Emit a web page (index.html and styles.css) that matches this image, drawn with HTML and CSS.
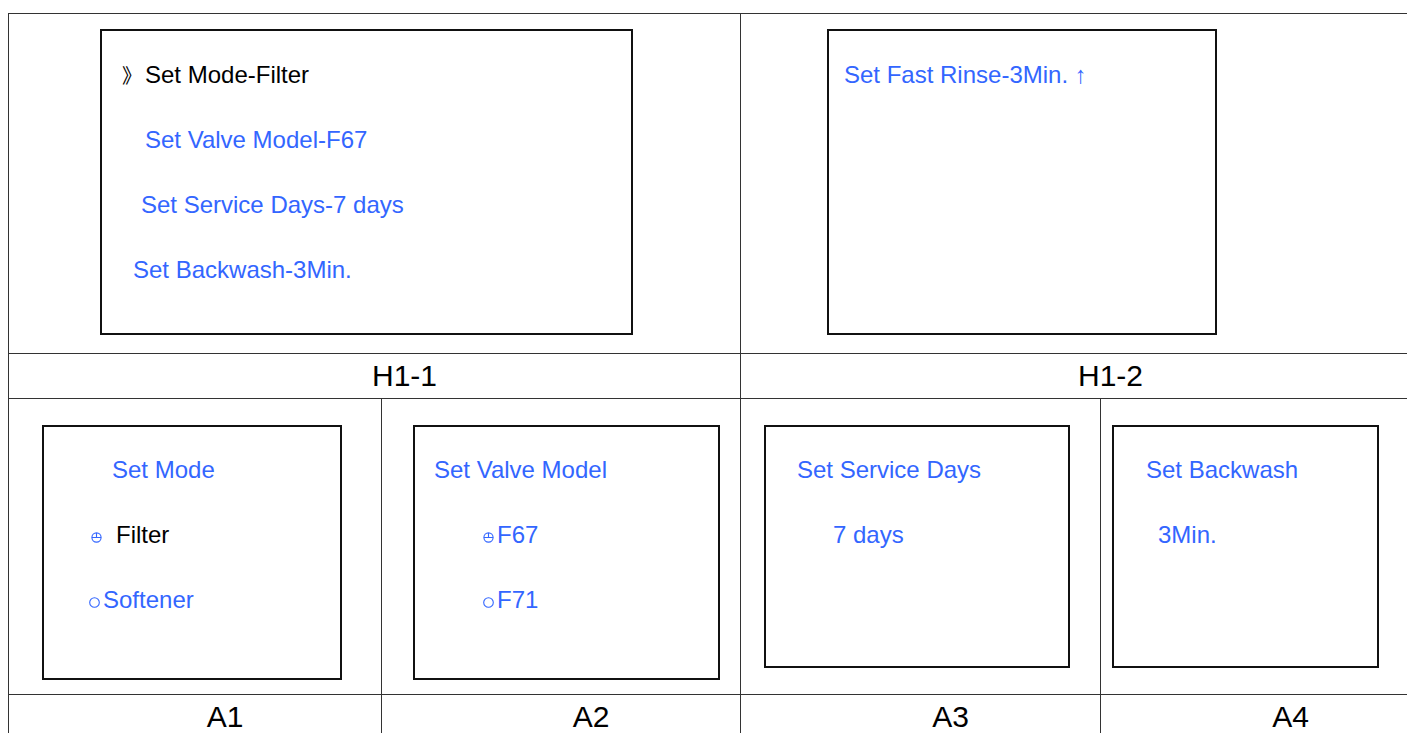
FILE: index.html
```html
<!DOCTYPE html>
<html lang="en">
<head>
    <meta charset="UTF-8">
    <meta name="viewport" content="width=device-width, initial-scale=1.0">
    <title>Menu screens</title>
    <link rel="stylesheet" href="styles.css">
</head>
<body>
    <div class="sheet">
        <!-- top row: main menu pages -->
        <div class="cell span-2 cell-h11">
            <div class="screen screen-h11">
                <div class="line black ind-20"><span class="pointer">》</span>Set Mode-Filter</div>
                <div class="line ind-43">Set Valve Model-F67</div>
                <div class="line ind-39">Set Service Days-7 days</div>
                <div class="line ind-31">Set Backwash-3Min.</div>
            </div>
        </div>
        <div class="cell span-2 cell-h12">
            <div class="screen screen-h12">
                <div class="line ind-15">Set Fast Rinse-3Min. ↑</div>
            </div>
        </div>
        <div class="cell span-2 label">H1-1</div>
        <div class="cell span-2 label">H1-2</div>

        <!-- bottom row: sub pages -->
        <div class="cell cell-a1">
            <div class="screen screen-tall screen-a1">
                <div class="line ind-68">Set Mode</div>
                <div class="line ind-47"><svg class="dot" width="11" height="11" viewBox="0 0 11 11"><circle cx="5.5" cy="5.5" r="4.6"/><path d="M0.9 5.5H10.1M5.5 0.9V6"/></svg><span class="black gap-14">Filter</span></div>
                <div class="line ind-45"><svg class="ring" width="11" height="11" viewBox="0 0 11 11"><circle cx="5.5" cy="5.5" r="4.8"/></svg><span class="gap-3">Softener</span></div>
            </div>
        </div>
        <div class="cell cell-a2">
            <div class="screen screen-tall screen-a2">
                <div class="line ind-19">Set Valve Model</div>
                <div class="line ind-68"><svg class="dot" width="11" height="11" viewBox="0 0 11 11"><circle cx="5.5" cy="5.5" r="4.6"/><path d="M0.9 5.5H10.1M5.5 0.9V6"/></svg><span class="gap-3">F67</span></div>
                <div class="line ind-68"><svg class="ring" width="11" height="11" viewBox="0 0 11 11"><circle cx="5.5" cy="5.5" r="4.8"/></svg><span class="gap-3">F71</span></div>
            </div>
        </div>
        <div class="cell cell-a3">
            <div class="screen screen-short screen-a3">
                <div class="line ind-31">Set Service Days</div>
                <div class="line ind-67">7 days</div>
            </div>
        </div>
        <div class="cell cell-a4">
            <div class="screen screen-short screen-a4">
                <div class="line ind-32">Set Backwash</div>
                <div class="line ind-44">3Min.</div>
            </div>
        </div>
        <div class="cell label">A1</div>
        <div class="cell label">A2</div>
        <div class="cell label">A3</div>
        <div class="cell label">A4</div>
    </div>
</body>
</html>
```

FILE: styles.css
```css
* {
    box-sizing: border-box;
}

body {
    margin: 0;
    overflow: hidden;
    background: #fff;
    font-family: "Liberation Sans", Arial, sans-serif;
}

.sheet {
    display: grid;
    grid-template-columns: 373px 359px 360px 320px;
    grid-template-rows: 340px 45px 296px 45px;
    width: 1413px;
    margin: 13px 0 0 8px;
    border-left: 1px solid #333;
    border-top: 1px solid #333;
}

.cell {
    border-right: 1px solid #333;
    border-bottom: 1px solid #333;
}

.span-2 {
    grid-column: span 2;
}

.label {
    padding-left: 60px;
    text-align: center;
    font-size: 30px;
    line-height: 44px;
    color: #000;
}

/* where each screen sits in its cell */
.cell-h11 { padding: 15px 0 0 91px; }
.cell-h12 { padding: 15px 0 0 86px; }
.cell-a1 { padding: 26px 0 0 33px; }
.cell-a2 { padding: 26px 0 0 31px; }
.cell-a3 { padding: 26px 0 0 23px; }
.cell-a4 { padding: 26px 0 0 11px; }

.screen {
    border: 2px solid #111;
    height: 306px;
    padding-top: 11px;
    color: #3366ff;
    font-size: 24px;
}

.screen-h11 { width: 533px; }
.screen-h12 { width: 390px; }

.screen-tall {
    height: 255px;
    padding-top: 10px;
}

.screen-short {
    height: 243px;
    padding-top: 10px;
}

.screen-a1 { width: 300px; }
.screen-a2 { width: 307px; }
.screen-a3 { width: 306px; }
.screen-a4 { width: 267px; }

.line {
    display: flex;
    align-items: baseline;
    height: 65px;
    line-height: 65px;
    white-space: nowrap;
}

.black {
    color: #000;
}

.pointer {
    display: inline-block;
    width: 23px;
    font-family: "Noto Sans CJK SC", sans-serif;
    font-size: 20px;
    color: #000;
}

.dot,
.ring {
    align-self: center;
    margin-top: 6px;
    fill: none;
    stroke: #3366ff;
    stroke-width: 1.1;
}

.ind-15 { padding-left: 15px; }
.ind-19 { padding-left: 19px; }
.ind-20 { padding-left: 20px; }
.ind-31 { padding-left: 31px; }
.ind-32 { padding-left: 32px; }
.ind-39 { padding-left: 39px; }
.ind-43 { padding-left: 43px; }
.ind-44 { padding-left: 44px; }
.ind-45 { padding-left: 45px; }
.ind-47 { padding-left: 47px; }
.ind-67 { padding-left: 67px; }
.ind-68 { padding-left: 68px; }

.gap-3 { margin-left: 3px; }
.gap-14 { margin-left: 14px; }
```
